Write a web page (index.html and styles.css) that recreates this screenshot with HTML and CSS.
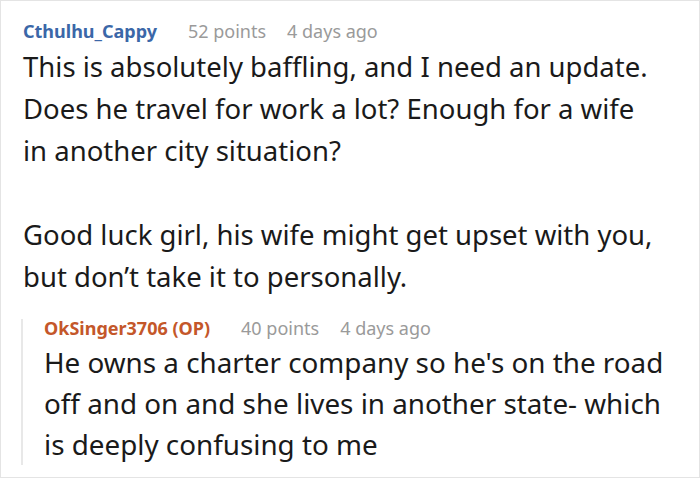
FILE: index.html
```html
<!DOCTYPE html>
<html>
<head>
<meta charset="utf-8">
<link rel="stylesheet" href="styles.css">
</head>
<body>
<div class="card">
  <div class="comment">
    <div class="meta">
      <span class="user">Cthulhu_Cappy</span>
      <span class="info points">52 points</span>
      <span class="info">4 days ago</span>
    </div>
    <div class="body main-body">
      <p>This is absolutely baffling, and I need an update. Does he travel for work a lot? Enough for a wife in another city situation?</p>
      <p>Good luck girl, his wife might get upset with you, but don’t take it to personally.</p>
    </div>
  </div>
  <div class="reply">
    <div class="meta reply-meta">
      <span class="user op">OkSinger3706 (OP)</span>
      <span class="info points">40 points</span>
      <span class="info">4 days ago</span>
    </div>
    <div class="body reply-body">
      <p>He owns a charter company so he's on the road off and on and she lives in another state- which is deeply confusing to me</p>
    </div>
  </div>
</div>
</body>
</html>
```

FILE: styles.css
```css
html, body {
  margin: 0;
  padding: 0;
  background: #fff;
}
.card {
  box-sizing: border-box;
  width: 700px;
  height: 478px;
  border: 1px solid #e4e4e4;
  font-family: "Noto Sans", "Open Sans", sans-serif;
  color: #1a1a1a;
  overflow: hidden;
}
.comment {
  padding: 18px 38px 0 22px;
}
.meta {
  display: flex;
  font-size: 18px;
  line-height: 24px;
}
.user {
  font-weight: 700;
  color: #3b67a8;
  margin-right: 31px;
}
.user.op {
  color: #c4572a;
}
.info {
  color: #9a9a9a;
}
.points {
  margin-right: 21px;
}
.body {
  font-size: 28px;
  line-height: 42px;
  margin-top: 3px;
}
.main-body {
  font-size: 27.5px;
}
.body p {
  margin: 0 0 42px 0;
}
.body p:last-child {
  margin-bottom: 0;
}
.reply {
  margin: 21px 20px 0 20px;
  padding: 0 0 0 21px;
  border-left: 2px solid #e8e8e8;
}
.reply-meta {
  line-height: 18px;
}
.reply-body {
  font-size: 27.8px;
  line-height: 41px;
  margin-top: 5px;
}
```
